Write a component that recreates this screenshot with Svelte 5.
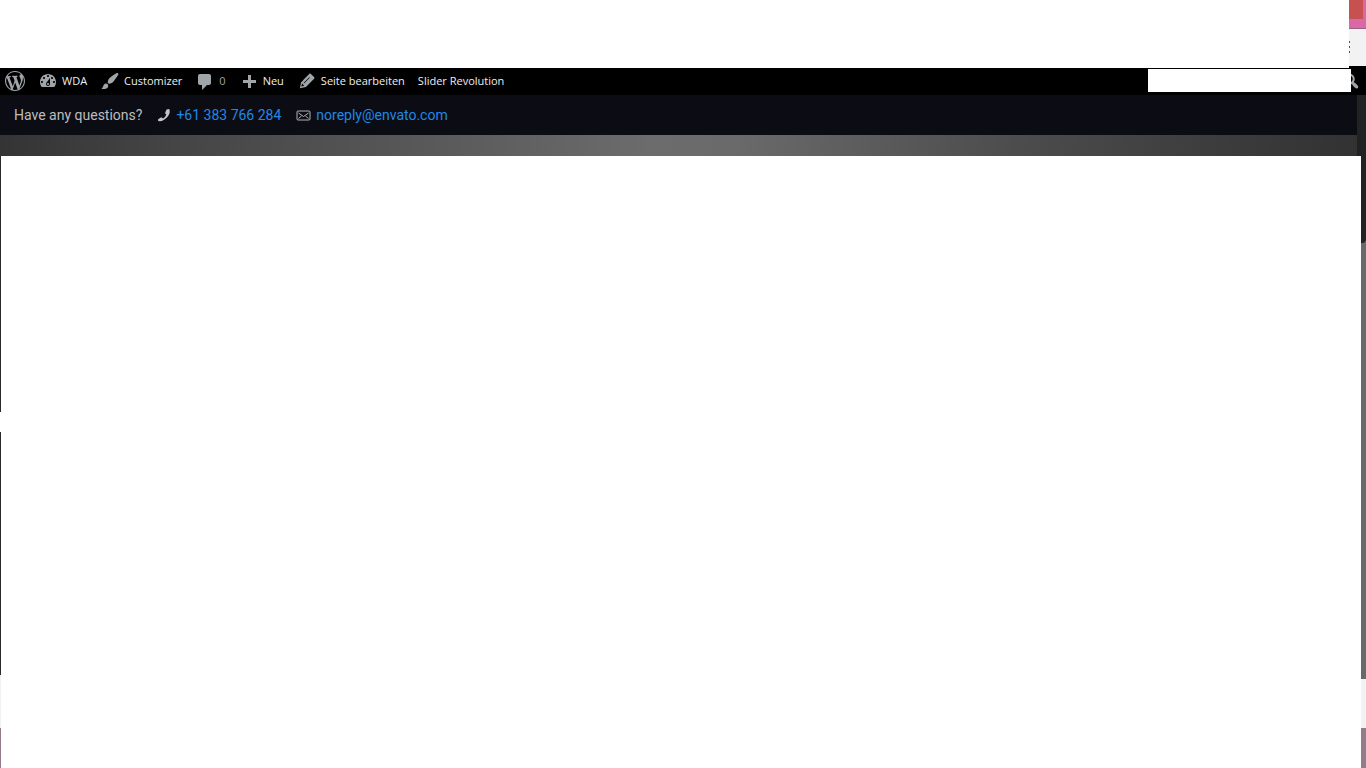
<script lang="ts">
  interface BarItem {
    label: string;
    icon?: string;
    kind?: string;
  }

  const wordpress =
    'M20 10c0-5.51-4.49-10-10-10C4.48 0 0 4.49 0 10c0 5.52 4.48 10 10 10 5.51 0 10-4.48 10-10zM7.78 15.37L4.37 6.22c.55-.02 1.17-.08 1.17-.08.5-.06.44-1.13-.06-1.11 0 0-1.45.11-2.37.11-.18 0-.37 0-.58-.01C4.12 2.69 6.87 1.11 10 1.11c2.33 0 4.45.87 6.05 2.34-.68-.11-1.65.39-1.65 1.58 0 .74.45 1.36.9 2.1.35.61.55 1.36.55 2.46 0 1.49-1.4 5-1.4 5l-3.03-8.37c.54-.02.82-.17.82-.17.5-.05.44-1.25-.06-1.22 0 0-1.44.12-2.38.12-.87 0-2.33-.12-2.33-.12-.5-.03-.56 1.2-.06 1.22l.92.08 1.26 3.41zM17.41 10c.24-.64.74-1.87.43-4.25.7 1.29 1.05 2.71 1.05 4.25 0 3.29-1.73 6.24-4.4 7.78.97-2.59 1.94-5.2 2.92-7.78zM6.1 18.09C3.12 16.65 1.11 13.53 1.11 10c0-1.3.23-2.48.72-3.59C3.25 10.3 4.67 14.2 6.1 18.09zm4.03-6.63l2.58 6.98c-.86.29-1.76.45-2.71.45-.79 0-1.57-.11-2.29-.33.81-2.38 1.62-4.74 2.42-7.1z';
  const search =
    'M12.14 4.18c1.87 1.87 2.11 4.75.72 6.89.12.1.22.21.36.31.2.16.47.36.81.59.34.24.56.39.66.47.42.31.73.57.94.78.32.32.6.65.84 1 .25.35.44.69.59 1.04.14.35.21.68.18 1-.02.32-.14.59-.36.81s-.49.34-.81.36c-.31.02-.65-.04-.99-.19-.35-.14-.7-.34-1.04-.59-.35-.24-.68-.52-1-.84-.21-.21-.47-.52-.77-.93-.1-.13-.25-.35-.47-.66-.22-.32-.4-.57-.56-.78-.16-.2-.29-.35-.44-.5-2.07 1.09-4.69.76-6.44-.98-2.14-2.15-2.14-5.64 0-7.78 2.15-2.15 5.63-2.15 7.78 0zm-1.41 6.36c1.36-1.37 1.36-3.58 0-4.95-1.37-1.37-3.59-1.37-4.95 0-1.37 1.37-1.37 3.58 0 4.95 1.36 1.37 3.58 1.37 4.95 0z';

  const items: BarItem[] = [
    {
      label: 'WDA',
      icon: 'M3.76 16h12.48c1.1-1.37 1.76-3.11 1.76-5 0-4.42-3.58-8-8-8s-8 3.58-8 8c0 1.89.66 3.63 1.76 5zM10 4c.55 0 1 .45 1 1s-.45 1-1 1-1-.45-1-1 .45-1 1-1zM6 6c.55 0 1 .45 1 1s-.45 1-1 1-1-.45-1-1 .45-1 1-1zm8 0c.55 0 1 .45 1 1s-.45 1-1 1-1-.45-1-1 .45-1 1-1zm-5.37 5.55L12 7v6c0 1.1-.9 2-2 2s-2-.9-2-2c0-.57.24-1.08.63-1.45zM4 10c.55 0 1 .45 1 1s-.45 1-1 1-1-.45-1-1 .45-1 1-1zm12 0c.55 0 1 .45 1 1s-.45 1-1 1-1-.45-1-1 .45-1 1-1zm-5 3c0-.55-.45-1-1-1s-1 .45-1 1 .45 1 1 1 1-.45 1-1z'
    },
    {
      label: 'Customizer',
      icon: 'M18.33 3.57s.27-.8-.31-1.36c-.53-.52-1.22-.24-1.22-.24-.61.3-5.76 3.47-7.67 5.57-.86.96-2.06 3.79-1.09 4.82.92.98 3.96-.17 4.79-1 2.06-2.06 5.21-7.17 5.5-7.79zM1.4 17.65c2.37-1.56 1.46-3.41 3.23-4.64.93-.65 2.22-.62 3.08.29.63.67.8 2.57-.16 3.46-1.57 1.45-4 1.55-6.15.89z'
    },
    {
      label: '0',
      kind: 'muted',
      icon: 'M5 3h9c1.1 0 2 .9 2 2v7c0 1.1-.9 2-2 2h-2l-5 5v-5H5c-1.1 0-2-.9-2-2V5c0-1.1.9-2 2-2z'
    },
    { label: 'Neu', icon: 'M17 9v3h-5v5H9v-5H4V9h5V4h3v5h5z' },
    {
      label: 'Seite bearbeiten',
      icon: 'M13.9 2.900l3.200 3.200c.46.46.42 1.24.03 1.64L8.900 16l-6 1.300 1.200-6s7.700-8 8.100-8.400c.39-.39 1.22-.39 1.700 0zM12.300 6.200l-5.800 5.900.5.5 5.800-5.900zM5 12.600l-.6 2.800 2.800-.6z'
    },
    { label: 'Slider Revolution' }
  ];
</script>

<div class="page">
  <div class="window-top">
    <div class="window-edge">
      <span class="close"></span>
      <button class="menu" type="button" aria-label="Menu"><i></i><i></i><i></i></button>
    </div>
  </div>

  <nav class="admin-bar">
    <a class="logo" href="#about" aria-label="WordPress">
      <svg viewBox="0 0 20 20"><path d={wordpress} /></svg>
    </a>
    {#each items as item}
      <a class={item.kind} href="#bar">
        {#if item.icon}
          <svg viewBox="0 0 20 20"><path fill-rule="evenodd" d={item.icon} /></svg>
        {/if}
        <span>{item.label}</span>
      </a>
    {/each}
    <form class="search">
      <input type="search" aria-label="Search" />
      <button type="button" aria-label="Submit search">
        <svg viewBox="0 0 20 20"><path d={search} /></svg>
      </button>
    </form>
  </nav>

  <div class="site">
    <div class="site-main">
      <div class="contact">
        <span>Have any questions?</span>
        <a href="tel:+61383766284">
          <svg class="phone" viewBox="0 0 14 14">
            <path d="M9.500 1.600l2.700-.6c1 2 .7 4.700-1.200 7.200C8.500 11.200 5.500 13.300 2.500 13.200.8 13 .7 12.100 1.200 11.200L4.300 9.200l1.700 1.200c1.600-1 2.700-2.300 3.300-4L8 5.200z" />
          </svg>
          +61 383 766 284
        </a>
        <a href="mailto:noreply@envato.com">
          <svg class="mail" viewBox="0 0 15 11">
            <rect x="1" y="1" width="13" height="9" rx="1" />
            <path d="M2.500 3l5 3.500 5-3.500M2.500 8.500l3-2.500M12.500 8.500l-3-2.500" />
          </svg>
          noreply@envato.com
        </a>
      </div>
      <div class="hero"></div>
    </div>
    <div class="track"></div>
  </div>

  <div class="body">
    <div class="edge left">
      <div class="shade"><span class="arrow"></span></div>
      <div class="pale"></div>
      <div class="mauve"></div>
    </div>
    <main></main>
    <div class="edge right">
      <div class="shade"><span class="thumb"></span></div>
      <div class="pale"></div>
      <div class="mauve"></div>
    </div>
  </div>
</div>

<style>
  :global(body) {
    background: #fff;
  }

  .page {
    min-height: 100vh;
    display: flex;
    flex-direction: column;
    overflow: hidden;
  }

  a {
    text-decoration: none;
  }

  svg {
    flex: none;
  }

  .window-top {
    height: 68px;
    display: flex;
    justify-content: flex-end;
  }

  .window-edge {
    width: 17px;
    display: flex;
    flex-direction: column;
    background: #000;
  }

  .close {
    height: 19px;
    margin-right: 3px;
    background: #c75050;
    box-shadow: 3px 0 #d868a6;
  }

  .menu {
    height: 47px;
    padding: 0;
    border: 0;
    border-top: 9px solid #d868a6;
    background: #f2f2f2;
    box-shadow: inset 0 1px #9b6085;
    display: flex;
    flex-direction: column;
    align-items: flex-start;
    justify-content: center;
    gap: 3px;
  }

  .menu i {
    width: 1px;
    height: 2px;
    background: #555;
  }

  .admin-bar {
    height: 27px;
    box-sizing: border-box;
    padding: 0 5px 2px;
    background: #000;
    display: flex;
    align-items: center;
    gap: 13px;
    font: 500 11px/24px "Open Sans", "Noto Sans", sans-serif;
  }

  .admin-bar a {
    display: flex;
    align-items: center;
    gap: 4px;
    color: #eee;
    white-space: nowrap;
  }

  .admin-bar .muted {
    color: #9ea3a8;
  }

  .admin-bar svg {
    width: 20px;
    height: 20px;
    fill: #a0a5aa;
  }

  .search {
    display: flex;
    align-items: center;
    margin-left: auto;
  }

  .search input {
    width: 203px;
    height: 23px;
    box-sizing: border-box;
    margin: 0;
    padding: 0 6px;
    border: 0;
    background: #fff;
    position: relative;
    z-index: 1;
    appearance: none;
  }

  .search button {
    display: flex;
    margin: 0 0 0 -10px;
    padding: 0;
    border: 0;
    background: none;
  }

  .site {
    display: flex;
  }

  .site-main {
    flex: 1;
  }

  .track {
    width: 9px;
    background: #222;
  }

  .contact {
    height: 40px;
    padding: 0 14px;
    background: #0c0d14;
    display: flex;
    align-items: center;
    gap: 15px;
    color: #bdbdbf;
    font: 14px/20px Roboto, sans-serif;
  }

  .contact a {
    display: flex;
    align-items: center;
    gap: 5px;
    color: #1e88e8;
  }

  .phone {
    width: 14px;
    height: 14px;
    fill: #c4c4c4;
  }

  .mail {
    width: 15px;
    height: 11px;
    fill: none;
    stroke: #b4b4b4;
  }

  .hero {
    height: 21px;
    background: linear-gradient(92deg, #343434 0, #444 12%, #575757 30%, #6c6c6c 48%, #6a6a6a 54%, #4c4c4c 75%, #3c3c3c 90%, #323232 100%);
  }

  .body {
    flex: 1;
    display: flex;
  }

  main {
    flex: 1;
    background: #fff;
  }

  .edge {
    display: flex;
    flex-direction: column;
  }

  .left {
    width: 1px;
  }

  .right {
    width: 5px;
  }

  .shade {
    flex: 1;
    display: flex;
    flex-direction: column;
    background: #2a2a2a;
  }

  .right .shade {
    background: #68696a;
  }

  .left .shade {
    padding-top: 256px;
  }

  .arrow {
    height: 20px;
    background: #fff;
  }

  .thumb {
    height: 87px;
    background: #222;
    border-radius: 0 0 4px 0;
  }

  .pale {
    height: 49px;
    background: #f2f2f2;
  }

  .left .pale {
    height: 53px;
  }

  .mauve {
    height: 40px;
    background: #927b8a;
  }
</style>
